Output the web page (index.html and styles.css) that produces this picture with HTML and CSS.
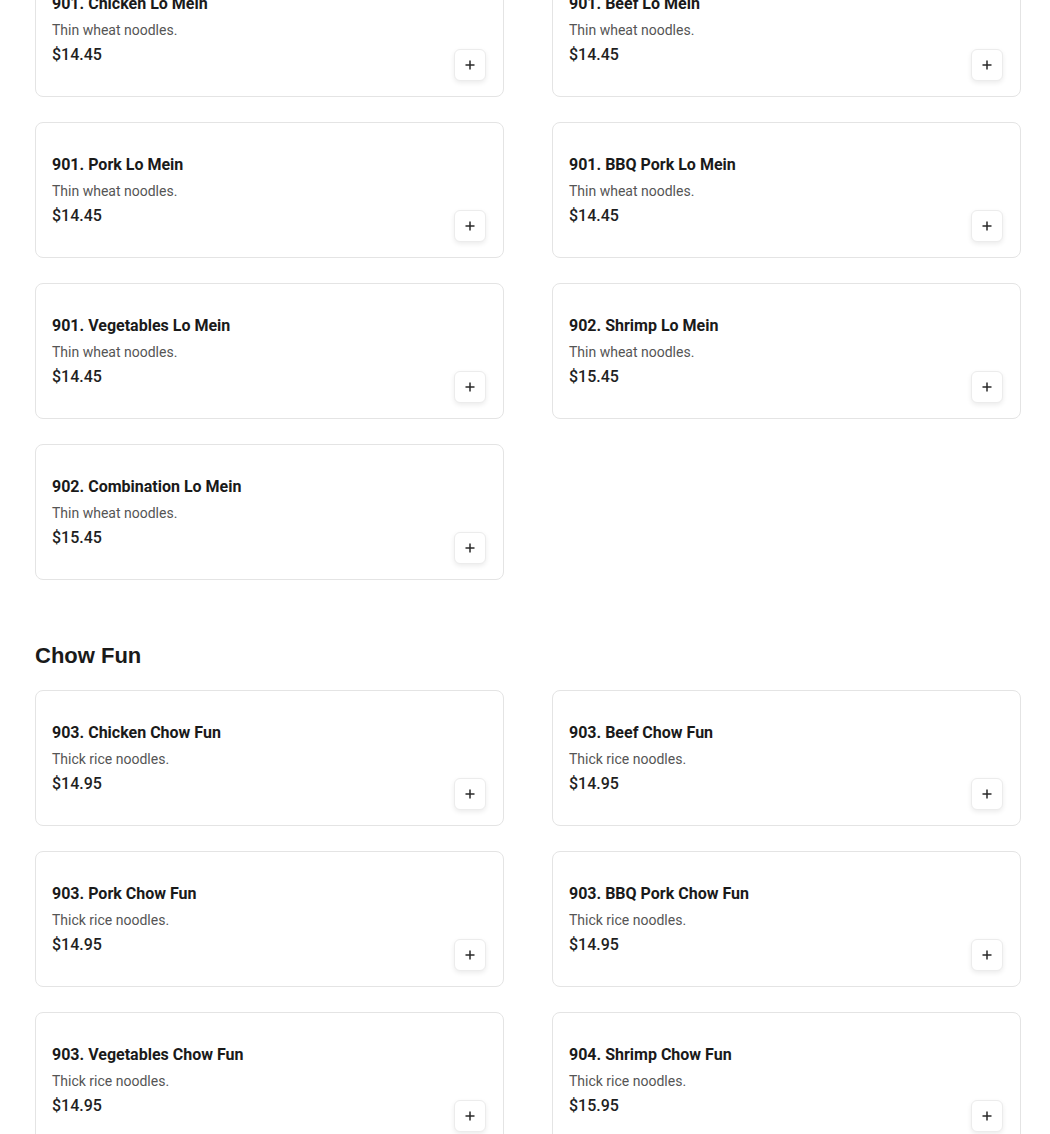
FILE: index.html
```html
<!DOCTYPE html>
<html>
<head>
<meta charset="utf-8">
<link rel="stylesheet" href="styles.css">
</head>
<body>
<main class="menu">
  <section class="section first">
    <div class="grid">
      <div class="card"><div class="info"><div class="title">901. Chicken Lo Mein</div><div class="desc">Thin wheat noodles.</div><div class="price">$14.45</div></div><button class="add"><svg viewBox="0 0 10 10" width="10" height="10"><path d="M5 0.5v9M0.5 5h9" stroke="#2a2a2a" stroke-width="1.5" fill="none"/></svg></button></div>
      <div class="card"><div class="info"><div class="title">901. Beef Lo Mein</div><div class="desc">Thin wheat noodles.</div><div class="price">$14.45</div></div><button class="add"><svg viewBox="0 0 10 10" width="10" height="10"><path d="M5 0.5v9M0.5 5h9" stroke="#2a2a2a" stroke-width="1.5" fill="none"/></svg></button></div>
      <div class="card"><div class="info"><div class="title">901. Pork Lo Mein</div><div class="desc">Thin wheat noodles.</div><div class="price">$14.45</div></div><button class="add"><svg viewBox="0 0 10 10" width="10" height="10"><path d="M5 0.5v9M0.5 5h9" stroke="#2a2a2a" stroke-width="1.5" fill="none"/></svg></button></div>
      <div class="card"><div class="info"><div class="title">901. BBQ Pork Lo Mein</div><div class="desc">Thin wheat noodles.</div><div class="price">$14.45</div></div><button class="add"><svg viewBox="0 0 10 10" width="10" height="10"><path d="M5 0.5v9M0.5 5h9" stroke="#2a2a2a" stroke-width="1.5" fill="none"/></svg></button></div>
      <div class="card"><div class="info"><div class="title">901. Vegetables Lo Mein</div><div class="desc">Thin wheat noodles.</div><div class="price">$14.45</div></div><button class="add"><svg viewBox="0 0 10 10" width="10" height="10"><path d="M5 0.5v9M0.5 5h9" stroke="#2a2a2a" stroke-width="1.5" fill="none"/></svg></button></div>
      <div class="card"><div class="info"><div class="title">902. Shrimp Lo Mein</div><div class="desc">Thin wheat noodles.</div><div class="price">$15.45</div></div><button class="add"><svg viewBox="0 0 10 10" width="10" height="10"><path d="M5 0.5v9M0.5 5h9" stroke="#2a2a2a" stroke-width="1.5" fill="none"/></svg></button></div>
      <div class="card"><div class="info"><div class="title">902. Combination Lo Mein</div><div class="desc">Thin wheat noodles.</div><div class="price">$15.45</div></div><button class="add"><svg viewBox="0 0 10 10" width="10" height="10"><path d="M5 0.5v9M0.5 5h9" stroke="#2a2a2a" stroke-width="1.5" fill="none"/></svg></button></div>
    </div>
  </section>
  <section class="section">
    <h2 class="heading">Chow Fun</h2>
    <div class="grid">
      <div class="card"><div class="info"><div class="title">903. Chicken Chow Fun</div><div class="desc">Thick rice noodles.</div><div class="price">$14.95</div></div><button class="add"><svg viewBox="0 0 10 10" width="10" height="10"><path d="M5 0.5v9M0.5 5h9" stroke="#2a2a2a" stroke-width="1.5" fill="none"/></svg></button></div>
      <div class="card"><div class="info"><div class="title">903. Beef Chow Fun</div><div class="desc">Thick rice noodles.</div><div class="price">$14.95</div></div><button class="add"><svg viewBox="0 0 10 10" width="10" height="10"><path d="M5 0.5v9M0.5 5h9" stroke="#2a2a2a" stroke-width="1.5" fill="none"/></svg></button></div>
      <div class="card"><div class="info"><div class="title">903. Pork Chow Fun</div><div class="desc">Thick rice noodles.</div><div class="price">$14.95</div></div><button class="add"><svg viewBox="0 0 10 10" width="10" height="10"><path d="M5 0.5v9M0.5 5h9" stroke="#2a2a2a" stroke-width="1.5" fill="none"/></svg></button></div>
      <div class="card"><div class="info"><div class="title">903. BBQ Pork Chow Fun</div><div class="desc">Thick rice noodles.</div><div class="price">$14.95</div></div><button class="add"><svg viewBox="0 0 10 10" width="10" height="10"><path d="M5 0.5v9M0.5 5h9" stroke="#2a2a2a" stroke-width="1.5" fill="none"/></svg></button></div>
      <div class="card"><div class="info"><div class="title">903. Vegetables Chow Fun</div><div class="desc">Thick rice noodles.</div><div class="price">$14.95</div></div><button class="add"><svg viewBox="0 0 10 10" width="10" height="10"><path d="M5 0.5v9M0.5 5h9" stroke="#2a2a2a" stroke-width="1.5" fill="none"/></svg></button></div>
      <div class="card"><div class="info"><div class="title">904. Shrimp Chow Fun</div><div class="desc">Thick rice noodles.</div><div class="price">$15.95</div></div><button class="add"><svg viewBox="0 0 10 10" width="10" height="10"><path d="M5 0.5v9M0.5 5h9" stroke="#2a2a2a" stroke-width="1.5" fill="none"/></svg></button></div>
    </div>
  </section>
</main>
</body>
</html>
```

FILE: styles.css
```css
* { box-sizing: border-box; }
html, body { margin: 0; padding: 0; background: #fff; }
body { font-family: Roboto, "Liberation Sans", Arial, sans-serif; color: #1a1a1a; overflow: hidden; }
.menu { padding: 0 29px 0 35px; margin-top: -39px; }
.section { margin-top: 62px; }
.section.first { margin-top: 0; }
.heading {
  font-family: "Liberation Sans", Arial, sans-serif;
  font-size: 22px; line-height: 28px; font-weight: 700;
  margin: 0 0 20px 0; color: #1a1a1a;
}
.grid { display: grid; grid-template-columns: 469px 469px; column-gap: 48px; row-gap: 25px; }
.card {
  display: flex; justify-content: space-between; align-items: flex-end;
  border: 1px solid #e4e4e4; border-radius: 8px; padding: 16px 17px 15px 16px; background: #fff;
}
.info { padding: 14px 0 14px; display: flex; flex-direction: column; }
.title { font-size: 16px; line-height: 24px; font-weight: 700; color: #1a1a1a; }
.desc { font-size: 14px; line-height: 20px; color: #555; margin-top: 4px; }
.price { font-size: 16px; line-height: 24px; font-weight: 500; color: #1f1f1f; margin-top: 3px; }
.add {
  width: 32px; height: 32px; padding: 0; display: flex; align-items: center; justify-content: center;
  background: #fff; border: 1px solid #ececec; border-radius: 6px;
  box-shadow: 0 2px 5px rgba(0,0,0,0.08); cursor: pointer;
}
.add svg { display: block; width: 10px; height: 10px; }
```
